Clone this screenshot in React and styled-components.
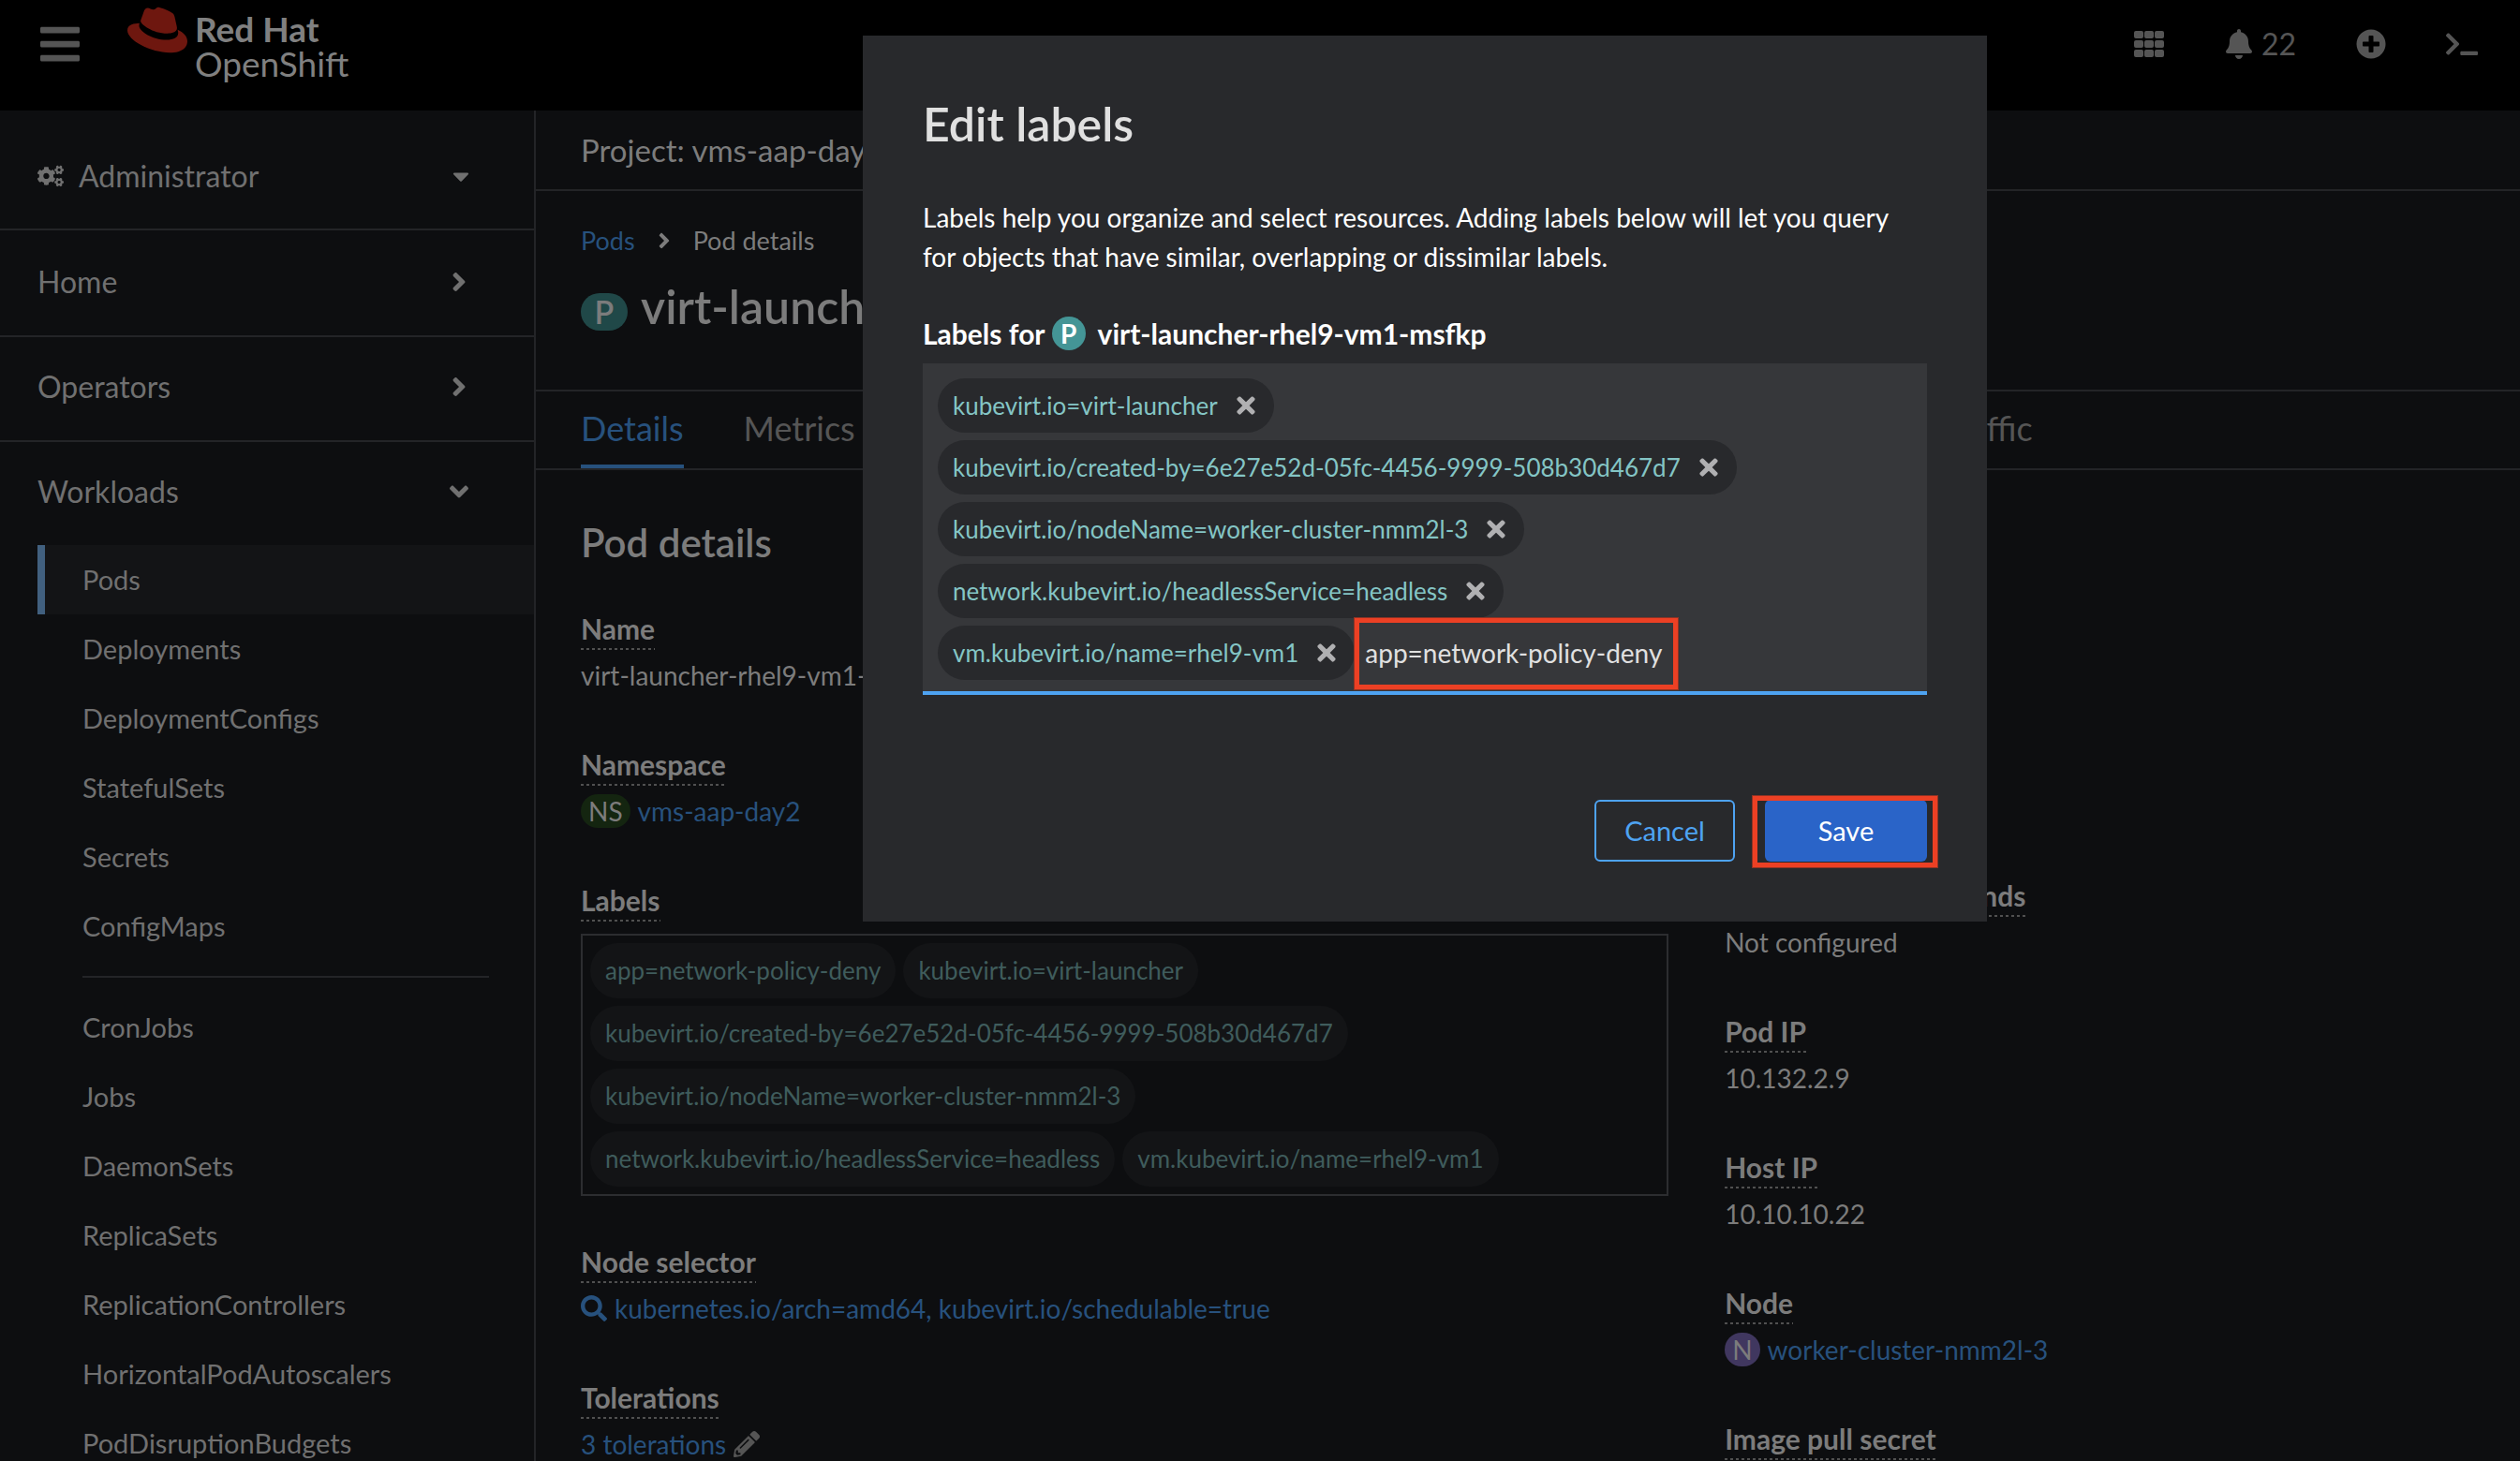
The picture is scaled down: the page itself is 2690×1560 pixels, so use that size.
import React from "react";
import styled, { createGlobalStyle } from "styled-components";
import {
  FaAngleDown,
  FaAngleRight,
  FaBars,
  FaBell,
  FaCaretDown,
  FaCogs,
  FaPencilAlt,
  FaPlusCircle,
  FaRedhat,
  FaSearch,
  FaTerminal,
  FaTimes,
} from "react-icons/fa";

const color = {
  page: "#0d0e10",
  line: "#232427",
  raised: "#131416",
  nav: "#707070",
  text: "#7c7c7c",
  muted: "#555555",
  link: "#27517d",
  chip: "#3f5c5c",
  modal: "#28292c",
  field: "#36373a",
  modalChip: "#84c5c5",
  accent: "#4ea3f2",
  mark: "#ec4024",
};

const GlobalStyle = createGlobalStyle`
  * { box-sizing: border-box; }
  body {
    margin: 0;
    background: ${color.page};
    color: ${color.text};
    font-family: Lato, "Liberation Sans", sans-serif;
    font-size: 28px;
    line-height: 42px;
  }
  button, input { font: inherit; }
  button { padding: 0; border: 0; background: none; color: inherit; cursor: pointer; }
  a { color: ${color.link}; text-decoration: none; }
  h1, h2, p, dl, dt, dd, ul, ol { margin: 0; padding: 0; }
  ul, ol { list-style: none; }
  svg { flex: none; display: block; }
`;

const Shell = styled.div`
  display: flex;
  flex-direction: column;
  height: 100vh;
  overflow: hidden;
`;

const Masthead = styled.header`
  display: flex;
  flex: none;
  align-items: center;
  height: 118px;
  padding: 0 45px 24px 40px;
  background: #000;
  color: ${color.muted};
`;

const IconButton = styled.button`
  display: flex;
  align-items: center;
  gap: 8px;
  font-size: 32px;
`;

const Brand = styled.a`
  display: flex;
  align-self: flex-start;
  gap: 8px;
  margin-left: 48px;
  color: #808080;
`;

const Hat = styled(FaRedhat)`
  color: #6e170f;
`;

const BrandText = styled.span`
  display: flex;
  flex-direction: column;
  padding-top: 12px;
  font-size: 37px;
  line-height: 37px;
`;

const Tools = styled.div`
  display: flex;
  align-items: center;
  gap: 64px;
  margin-left: auto;
`;

const Body = styled.div`
  display: flex;
  flex: 1;
  min-height: 0;
`;

const Sidebar = styled.nav`
  flex: none;
  width: 572px;
  overflow: hidden;
  border-right: 2px solid ${color.line};
  color: ${color.nav};
`;

const Perspective = styled.button`
  display: flex;
  align-items: center;
  gap: 16px;
  width: 100%;
  height: 128px;
  padding: 14px 64px 0 40px;
  border-bottom: 2px solid ${color.line};
  font-size: 32px;
`;

const Sections = styled.div`
  padding-top: 2px;
`;

const SectionToggle = styled.button`
  display: flex;
  align-items: center;
  width: 100%;
  height: ${(p) => (p.$open ? 110 : 112)}px;
  padding: 0 64px 4px 40px;
  border-bottom: ${(p) => (p.$open ? "0" : `2px solid ${color.line}`)};
  font-size: 32px;
`;

const Grow = styled.span`
  flex: 1;
  text-align: left;
`;

const NavList = styled.ul`
  margin-left: 40px;
`;

const NavLink = styled.a`
  display: block;
  padding: 16px 0 16px 40px;
  border-left: 8px solid ${(p) => (p.$active ? "#41607f" : "transparent")};
  background: ${(p) => (p.$active ? color.raised : "none")};
  color: ${color.nav};
  font-size: 29px;
`;

const NavDivider = styled.li`
  height: 2px;
  margin: 16px 48px;
  background: ${color.line};
`;

const Main = styled.main`
  flex: 1;
  min-width: 0;
`;

const ProjectBar = styled.div`
  display: flex;
  align-items: center;
  height: 86px;
  padding: 0 48px;
  border-bottom: 2px solid ${color.line};
`;

const ProjectButton = styled.button`
  display: flex;
  align-items: center;
  gap: 16px;
  font-size: 33px;
`;

const PageHead = styled.div`
  padding: 33px 48px 59px;
  border-bottom: 2px solid ${color.line};
`;

const Breadcrumb = styled.ol`
  display: flex;
  align-items: center;
  gap: 18px;
  font-size: 27px;
  line-height: 40px;
`;

const Title = styled.h1`
  display: flex;
  align-items: center;
  gap: 14px;
  margin-top: 20px;
  font-size: 50px;
  font-weight: 600;
  line-height: 60px;
`;

const Badge = styled.span`
  display: inline-flex;
  flex: none;
  align-items: center;
  justify-content: center;
  min-width: ${(p) => (p.$large ? 50 : 36)}px;
  height: ${(p) => (p.$large ? 40 : 36)}px;
  padding: 0 8px;
  border-radius: 20px;
  background: ${(p) => p.$fill};
  font-size: ${(p) => (p.$large ? 34 : 28)}px;
  line-height: 36px;
`;

const TitleBadge = styled(Badge)`
  margin-top: 12px;
`;

const Tabs = styled.ul`
  display: flex;
  gap: 64px;
  padding: 0 48px;
  border-bottom: 2px solid ${color.line};
`;

const Tab = styled.button`
  min-width: 96px;
  height: 82px;
  border-bottom: 4px solid ${(p) => (p.$active ? color.link : "transparent")};
  color: ${(p) => (p.$active ? color.link : color.muted)};
  font-size: 36px;
  white-space: nowrap;
`;

const Details = styled.section`
  padding: 53px 48px;
`;

const SectionTitle = styled.h2`
  margin-bottom: 47px;
  font-size: 42px;
  font-weight: 600;
  line-height: 48px;
`;

const Columns = styled.div`
  display: grid;
  grid-template-columns: minmax(0, 29fr) minmax(0, 20fr);
  gap: 60px;
  align-items: start;
`;

const Fields = styled.dl`
  display: flex;
  flex-direction: column;
  gap: 53px;
`;

const Field = styled.div`
  display: flex;
  flex-direction: column;
  align-items: flex-start;
  gap: 6px;
`;

const Term = styled.dt`
  padding-bottom: 2px;
  background: repeating-linear-gradient(90deg, #505050 0 3px, transparent 3px 6px) left bottom / 100% 2px no-repeat;
  font-size: 30px;
  font-weight: 700;
`;

const Value = styled.dd`
  display: flex;
  align-items: center;
  gap: 8px;
  white-space: nowrap;
`;

const StatusValue = styled(Value)`
  line-height: 37px;
`;

const ValueLink = styled.a`
  display: flex;
  align-items: center;
  gap: 8px;
`;

const LabelBox = styled.dd`
  display: flex;
  flex-wrap: wrap;
  gap: 8px;
  width: 100%;
  margin: 7px 0 -4px;
  padding: 8px;
  border: 2px solid #2c2d30;
`;

const PageChip = styled.a`
  padding: 0 16px;
  border-radius: 30px;
  background: ${color.raised};
  color: ${color.chip};
  font-size: 26px;
  line-height: 59px;
`;

const Backdrop = styled.div`
  position: fixed;
  inset: 0;
  display: flex;
  align-items: flex-start;
  justify-content: center;
  padding: 38px 0 0 352px;
`;

const Dialog = styled.form`
  width: 1200px;
  padding: 63px 64px 64px;
  background: ${color.modal};
  color: #fff;
`;

const DialogTitle = styled.h1`
  margin-bottom: 48px;
  color: #e0e0e0;
  font-size: 50px;
  font-weight: 600;
  line-height: 62px;
`;

const FieldLabel = styled.label`
  display: flex;
  align-items: center;
  gap: 7px;
  margin: 40px 0 11px;
  font-size: 30px;
  font-weight: 700;
`;

const FieldName = styled.span`
  padding-left: 6px;
`;

const TagField = styled.div`
  display: flex;
  flex-wrap: wrap;
  gap: 8px;
  padding: 16px 16px 12px;
  border-bottom: 4px solid ${color.accent};
  background: ${color.field};
`;

const Tag = styled.span`
  display: flex;
  align-items: center;
  gap: 16px;
  height: 58px;
  padding: 0 16px;
  border-radius: 29px;
  background: ${color.modal};
  color: ${color.modalChip};
  font-size: 26px;
`;

const RemoveTag = styled.button`
  color: #b0b0b2;
`;

const Marked = styled.span`
  position: relative;
  display: flex;

  &::after {
    content: "";
    position: absolute;
    inset: ${(p) => p.$inset};
    border: 6px solid ${color.mark};
    outline: 1px solid #8f3325;
    outline-offset: -1px;
    pointer-events: none;
  }
`;

const TagInput = styled.input`
  width: 332px;
  height: 58px;
  padding: 0 3px;
  border: 0;
  outline: 0;
  background: none;
  color: #e0e0e0;
`;

const Actions = styled.div`
  display: flex;
  justify-content: flex-end;
  gap: 32px;
  margin-top: 112px;
`;

const CancelButton = styled.button`
  width: 150px;
  height: 66px;
  border: 2px solid ${color.accent};
  border-radius: 6px;
  color: ${color.accent};
  font-size: 29px;
`;

const SaveButton = styled.button`
  width: 173px;
  height: 66px;
  border-radius: 6px;
  background: #2a64c8;
  color: #fff;
  font-size: 29px;
`;

const GridIcon = () => (
  <svg width="32" height="28" viewBox="0 0 32 28" fill="currentColor" aria-hidden="true">
    {[0, 10, 20].map((y) =>
      [0, 11, 22].map((x) => <rect key={`${x}-${y}`} x={x} y={y} width="10" height="8" rx="2" />)
    )}
  </svg>
);

const navTop = ["Pods", "Deployments", "DeploymentConfigs", "StatefulSets", "Secrets", "ConfigMaps"];
const navBottom = [
  "CronJobs",
  "Jobs",
  "DaemonSets",
  "ReplicaSets",
  "ReplicationControllers",
  "HorizontalPodAutoscalers",
  "PodDisruptionBudgets",
];
const tabs = ["Details", "Metrics", "YAML", "Environment", "Logs", "Events", "Terminal", "Network traffic"];
const tags = [
  "kubevirt.io=virt-launcher",
  "kubevirt.io/created-by=6e27e52d-05fc-4456-9999-508b30d467d7",
  "kubevirt.io/nodeName=worker-cluster-nmm2l-3",
  "network.kubevirt.io/headlessService=headless",
  "vm.kubevirt.io/name=rhel9-vm1",
];

const NavItem = ({ name, active }) => (
  <li>
    <NavLink href="#" $active={active}>
      {name}
    </NavLink>
  </li>
);

const Detail = ({ term, children }) => (
  <Field>
    <Term>{term}</Term>
    <Value>{children}</Value>
  </Field>
);

export default function App() {
  return (
    <>
      <GlobalStyle />
      <Shell>
        <Masthead>
          <IconButton type="button" aria-label="Toggle navigation">
            <FaBars size={48} />
          </IconButton>
          <Brand href="#">
            <Hat size={64} />
            <BrandText>
              <b>Red Hat</b>
              <span>OpenShift</span>
            </BrandText>
          </Brand>
          <Tools>
            <IconButton type="button" aria-label="Applications">
              <GridIcon />
            </IconButton>
            <IconButton type="button" aria-label="Notifications">
              <FaBell size={32} />
              22
            </IconButton>
            <IconButton type="button" aria-label="Create">
              <FaPlusCircle size={32} />
            </IconButton>
            <IconButton type="button" aria-label="Command line">
              <FaTerminal size={34} />
            </IconButton>
          </Tools>
        </Masthead>
        <Body>
          <Sidebar>
            <Perspective type="button">
              <FaCogs size={28} />
              <Grow>Administrator</Grow>
              <FaCaretDown size={28} />
            </Perspective>
            <Sections>
              {["Home", "Operators"].map((name) => (
                <SectionToggle type="button" key={name}>
                  <Grow>{name}</Grow>
                  <FaAngleRight size={32} />
                </SectionToggle>
              ))}
              <SectionToggle type="button" $open>
                <Grow>Workloads</Grow>
                <FaAngleDown size={32} />
              </SectionToggle>
              <NavList>
                {navTop.map((name) => (
                  <NavItem key={name} name={name} active={name === "Pods"} />
                ))}
                <NavDivider />
                {navBottom.map((name) => (
                  <NavItem key={name} name={name} />
                ))}
              </NavList>
            </Sections>
          </Sidebar>
          <Main>
            <ProjectBar>
              <ProjectButton type="button">
                Project: vms-aap-day2 <FaCaretDown size={28} />
              </ProjectButton>
            </ProjectBar>
            <PageHead>
              <Breadcrumb>
                <li>
                  <a href="#">Pods</a>
                </li>
                <FaAngleRight size={26} />
                <li>Pod details</li>
              </Breadcrumb>
              <Title>
                <TitleBadge $large $fill="#204848">
                  P
                </TitleBadge>
                virt-launcher-rhel9-vm1-msfkp
              </Title>
            </PageHead>
            <Tabs>
              {tabs.map((name) => (
                <li key={name}>
                  <Tab type="button" $active={name === "Details"}>
                    {name}
                  </Tab>
                </li>
              ))}
            </Tabs>
            <Details>
              <SectionTitle>Pod details</SectionTitle>
              <Columns>
                <Fields>
                  <Detail term="Name">virt-launcher-rhel9-vm1-msfkp</Detail>
                  <Detail term="Namespace">
                    <Badge $fill="#142510">NS</Badge>
                    <a href="#">vms-aap-day2</a>
                  </Detail>
                  <Field>
                    <Term>Labels</Term>
                    <LabelBox>
                      {["app=network-policy-deny", ...tags].map((name) => (
                        <PageChip href="#" key={name}>
                          {name}
                        </PageChip>
                      ))}
                    </LabelBox>
                  </Field>
                  <Detail term="Node selector">
                    <ValueLink href="#">
                      <FaSearch size={28} />
                      kubernetes.io/arch=amd64, kubevirt.io/schedulable=true
                    </ValueLink>
                  </Detail>
                  <Detail term="Tolerations">
                    <a href="#">3 tolerations</a>
                    <FaPencilAlt size={28} color={color.muted} />
                  </Detail>
                </Fields>
                <Fields>
                  <Field>
                    <Term>Status</Term>
                    <StatusValue>Running</StatusValue>
                  </Field>
                  <Detail term="Restart policy">Always restart</Detail>
                  <Detail term="Active deadline seconds">Not configured</Detail>
                  <Detail term="Pod IP">10.132.2.9</Detail>
                  <Detail term="Host IP">10.10.10.22</Detail>
                  <Detail term="Node">
                    <Badge $fill="#40375f">N</Badge>
                    <a href="#">worker-cluster-nmm2l-3</a>
                  </Detail>
                  <Detail term="Image pull secret">Not configured</Detail>
                </Fields>
              </Columns>
            </Details>
          </Main>
        </Body>
      </Shell>
      <Backdrop>
        <Dialog role="dialog" aria-labelledby="dialog-title" onSubmit={(e) => e.preventDefault()}>
          <DialogTitle id="dialog-title">Edit labels</DialogTitle>
          <p>
            Labels help you organize and select resources. Adding labels below will let you query for objects that have
            similar, overlapping or dissimilar labels.
          </p>
          <FieldLabel htmlFor="tags-input">
            Labels for
            <Badge $fill="#449596">P</Badge>
            <FieldName>virt-launcher-rhel9-vm1-msfkp</FieldName>
          </FieldLabel>
          <TagField>
            {tags.map((name) => (
              <Tag key={name}>
                {name}
                <RemoveTag type="button" aria-label={`Remove ${name}`}>
                  <FaTimes size={28} />
                </RemoveTag>
              </Tag>
            ))}
            <Marked $inset="-9px -6px -11px -9px">
              <TagInput id="tags-input" defaultValue="app=network-policy-deny" />
            </Marked>
          </TagField>
          <Actions>
            <CancelButton type="button">Cancel</CancelButton>
            <Marked $inset="-5px -12px -7px -14px">
              <SaveButton type="submit">Save</SaveButton>
            </Marked>
          </Actions>
        </Dialog>
      </Backdrop>
    </>
  );
}
